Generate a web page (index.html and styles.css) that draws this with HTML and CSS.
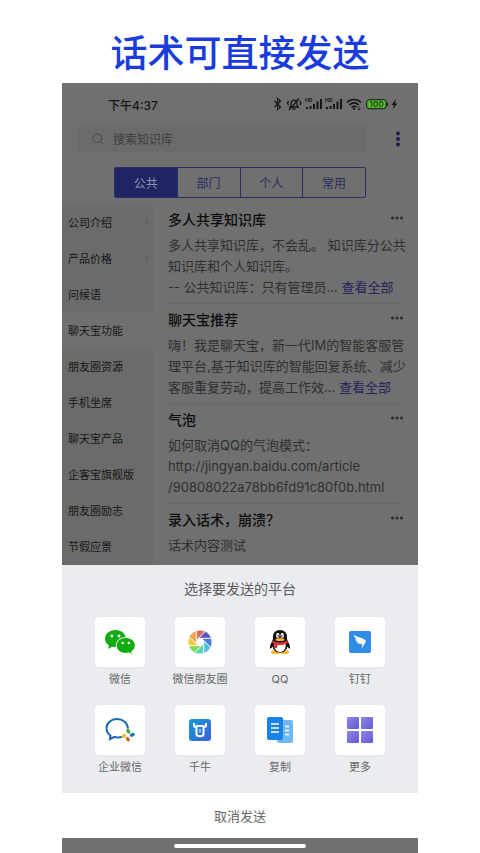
FILE: index.html
```html
<!DOCTYPE html>
<html lang="zh-CN">
<head>
<meta charset="utf-8">
<meta name="viewport" content="width=device-width, initial-scale=1">
<title>话术可直接发送</title>
<link rel="stylesheet" href="styles.css">
</head>
<body>
<h1 class="headline">话术可直接发送</h1>
<div class="phone">
  <header class="status">
    <span>下午4:37</span>
    <svg class="status-icons" width="126" height="16" viewBox="0 0 126 16" aria-hidden="true">
      <path d="M2.500 5l6 6L5.500 13.500V2.500L8.500 5l-6 6" fill="none" stroke="#161616" stroke-width="1.200"/>
      <g fill="none" stroke="#161616" stroke-width="1.300">
        <path d="M18 11c1.500-1.500 1-3 1.300-4.500 .5-3.300 5-3.300 5.500 0 .3 1.500-.2 3 1.200 4.500zM20.500 13h3M17 14L27 2.500M16.500 5l-1 2 1 2M28 5l1 2-1 2"/>
      </g>
      <g fill="#161616">
        <path d="M34 11h2v2h-2zM37.500 10h2v3h-2zM41 8h2v5h-2zM44.500 5.500h2V13h-2zM48 3h2v10h-2zM54 11h2v2h-2zM57.500 10h2v3h-2zM61 8h2v5h-2zM64.500 5.500h2V13h-2zM68 3h2v10h-2z"/>
        <text class="hd" x="33" y="6">HD</text>
        <text class="hd" x="53" y="6">HD</text>
      </g>
      <g fill="none" stroke="#161616" stroke-width="1.500">
        <path d="M75 6.500c4-4 10-4 14 0M77.300 9c3-2.700 6.500-2.700 9.400 0M79.500 11.300c1.700-1.500 3.400-1.500 5 0"/>
      </g>
      <circle cx="82" cy="12.700" r="1.200" fill="#161616"/>
      <path d="M87 10v4m-1.500-1.500L87 14l1.500-1.500" stroke="#161616" fill="none" stroke-width=".8"/>
      <rect x="94.700" y="3.700" width="19.500" height="9" rx="2.500" fill="#55b52f" stroke="#161616"/>
      <path d="M115.500 6.500v3.500" stroke="#161616"/>
      <text class="charge" x="104.500" y="11">100</text>
      <path d="M124 3l-4.500 6h2.500l-1.500 4.500L125.500 7.500H123z" fill="#161616"/>
    </svg>
  </header>
  <div class="search-row">
    <label class="search">
      <svg width="12" height="12" viewBox="0 0 12 12" aria-hidden="true"><circle cx="5.300" cy="5.300" r="4.300"/><path d="M8.500 8.500l2.500 2.500"/></svg>
      <input type="text" placeholder="搜索知识库" aria-label="搜索知识库">
    </label>
    <button class="menu" aria-label="菜单"><svg width="6" height="16" viewBox="0 0 6 16"><circle cx="3" cy="2.500" r="2"/><circle cx="3" cy="8" r="2"/><circle cx="3" cy="13.500" r="2"/></svg></button>
  </div>
  <nav class="tabs">
    <button class="on">公共</button><button>部门</button><button>个人</button><button>常用</button>
  </nav>
  <div class="library">
    <nav class="side">
      <button>公司介绍<svg width="5" height="8" viewBox="0 0 5 8"><path d="M1 1l3 3-3 3"/></svg></button>
      <button>产品价格<svg width="5" height="8" viewBox="0 0 5 8"><path d="M1 1l3 3-3 3"/></svg></button>
      <button>问候语</button>
      <button class="on">聊天宝功能</button>
      <button>朋友圈资源</button>
      <button>手机坐席</button>
      <button>聊天宝产品</button>
      <button>企客宝旗舰版</button>
      <button>朋友圈励志</button>
      <button>节假应景</button>
    </nav>
    <main class="list">
      <article>
        <header><h2>多人共享知识库</h2><button class="more" aria-label="更多操作"><svg width="12" height="4" viewBox="0 0 12 4"><circle cx="1.500" cy="2" r="1.500"/><circle cx="6" cy="2" r="1.500"/><circle cx="10.500" cy="2" r="1.500"/></svg></button></header>
        <p>多人共享知识库，不会乱。 知识库分公共<br>知识库和个人知识库。<br>-- 公共知识库：只有管理员... <a href="#">查看全部</a></p>
      </article>
      <article>
        <header><h2>聊天宝推荐</h2><button class="more" aria-label="更多操作"><svg width="12" height="4" viewBox="0 0 12 4"><circle cx="1.500" cy="2" r="1.500"/><circle cx="6" cy="2" r="1.500"/><circle cx="10.500" cy="2" r="1.500"/></svg></button></header>
        <p>嗨！我是聊天宝，新一代IM的智能客服管<br>理平台,基于知识库的智能回复系统、减少<br>客服重复劳动，提高工作效... <a href="#">查看全部</a></p>
      </article>
      <article>
        <header><h2>气泡</h2><button class="more" aria-label="更多操作"><svg width="12" height="4" viewBox="0 0 12 4"><circle cx="1.500" cy="2" r="1.500"/><circle cx="6" cy="2" r="1.500"/><circle cx="10.500" cy="2" r="1.500"/></svg></button></header>
        <p>如何取消QQ的气泡模式：<br>http://jingyan.baidu.com/article<br>/90808022a78bb6fd91c80f0b.html</p>
      </article>
      <article>
        <header><h2>录入话术，崩溃？</h2><button class="more" aria-label="更多操作"><svg width="12" height="4" viewBox="0 0 12 4"><circle cx="1.500" cy="2" r="1.500"/><circle cx="6" cy="2" r="1.500"/><circle cx="10.500" cy="2" r="1.500"/></svg></button></header>
        <p>话术内容测试</p>
      </article>
    </main>
  </div>
  <section class="sheet">
    <h3>选择要发送的平台</h3>
    <div class="apps">
      <button><span class="tile"><svg width="32" height="26" viewBox="0 0 32 26">
        <path fill="#12ab12" d="M11.500 1C5.500 1 1 4.800 1 9.700c0 2.800 1.400 5 3.900 6.600L4 20l4-2.200c1.200.3 2.300.4 3.500.4 6 0 10.500-3.900 10.500-8.500S17.500 1 11.500 1z"/>
        <path fill="#12ab12" stroke="#fff" stroke-width="1" d="M21.700 8.500c-5.300 0-9.500 3.400-9.500 7.900s4.200 8 9.500 8c1.200 0 2.300-.2 3.300-.5l3.500 1.800-.9-3.100c2.300-1.500 3.700-3.600 3.700-6.200 0-4.500-4.300-7.900-9.600-7.900z"/>
        <g fill="#fff"><circle cx="7.800" cy="7" r="1.400"/><circle cx="15" cy="7" r="1.400"/><circle cx="18.700" cy="14" r="1.200"/><circle cx="24.800" cy="14" r="1.200"/></g>
      </svg></span>微信</button>
      <button><span class="tile"><svg width="24" height="24" viewBox="-12 -12 24 24">
        <defs><path id="blade" d="M4 0L7.790 9.140A12 12 0 0 1-.95 11.970L2.830 2.830z"/></defs>
        <g stroke="#fff" stroke-width=".7">
          <use href="#blade" fill="#df6b5c" transform="rotate(-157)"/>
          <use href="#blade" fill="#5b50c0" transform="rotate(-112)"/>
          <use href="#blade" fill="#517fd8" transform="rotate(-67)"/>
          <use href="#blade" fill="#55bce2" transform="rotate(-22)"/>
          <use href="#blade" fill="#5bd3b0" transform="rotate(23)"/>
          <use href="#blade" fill="#7ed957" transform="rotate(68)"/>
          <use href="#blade" fill="#f1c93b" transform="rotate(113)"/>
          <use href="#blade" fill="#f0a24c" transform="rotate(158)"/>
        </g>
      </svg></span>微信朋友圈</button>
      <button><span class="tile"><svg width="22" height="26" viewBox="0 0 22 26">
        <ellipse cx="6.500" cy="23" rx="4.500" ry="2" fill="#f5b52e"/><ellipse cx="15.500" cy="23" rx="4.500" ry="2" fill="#f5b52e"/>
        <path d="M11 1C6.500 1 4 4 4 8c0 2-.2 3.500-1.200 5C1.500 15 .8 17 1 19c.5 1.300 1.500.2 2.500-1.500C4.500 21.500 7 23.500 11 23.500s6.500-2 7.500-6c1 1.700 2 2.800 2.500 1.500.2-2-.5-4-1.800-6C18.200 11.500 18 10 18 8c0-4-2.500-7-7-7z" fill="#111"/>
        <path d="M5.500 14h11c1 5-1.500 9-5.500 9s-6.500-4-5.500-9z" fill="#fff"/>
        <ellipse cx="8.800" cy="6.500" rx="1.700" ry="2.400" fill="#fff"/><ellipse cx="13.200" cy="6.500" rx="1.700" ry="2.400" fill="#fff"/>
        <circle cx="9.200" cy="6.800" r=".8"/><circle cx="12.800" cy="6.800" r=".8"/>
        <ellipse cx="11" cy="10.500" rx="4.500" ry="1.600" fill="#f5b52e"/>
        <path d="M4 11.500c4 2.500 10 2.500 14 0l.8 2.500c-3 2-6.800 2.300-10.300 1.800L8 19H5.300l.4-4L3.200 14z" fill="#df2f2f"/>
      </svg></span>QQ</button>
      <button><span class="tile"><svg width="22" height="22" viewBox="0 0 22 22">
        <rect width="22" height="22" rx="2" fill="#2f8de8"/>
        <path d="M5 4c4 2.500 8 2.700 11.300 5 .8.700.4 1.800-.2 2.900l-1.300 2-2.300 4.100.8-3.400-.7-1.600c-2.300.2-3.800-.3-4.900-1.900l2.500-.2C7.800 11 6.500 10 6 8.300l2.500.4C6.200 7.300 5.100 6 5 4z" fill="#fff"/>
      </svg></span>钉钉</button>
      <button><span class="tile"><svg width="30" height="26" viewBox="0 0 30 26">
        <path d="M23 11.500C22.500 5.500 17.500 2 12 2 6 2 1.500 6 1.500 11.200c0 3 1.500 5.600 4 7.300L5 22l4-2c3 .7 6 .5 8.500-.4" fill="none" stroke="#1c66b0" stroke-width="2"/>
        <g stroke-width="3.400" stroke-linecap="round"><path d="M22.800 13.500l1 1.500" stroke="#4cab43"/><path d="M28 17.500l-1.500.8" stroke="#1777c4"/><path d="M23.300 22.800l-.8-1.200" stroke="#d9652b"/><path d="M18.300 19.500l1.400-1" stroke="#efc22f"/></g>
      </svg></span>企业微信</button>
      <button><span class="tile"><svg width="22" height="22" viewBox="0 0 22 22">
        <defs><linearGradient id="bull" x2="1" y2="1"><stop stop-color="#159ad9"/><stop offset="1" stop-color="#3a62d8"/></linearGradient></defs>
        <rect width="22" height="22" rx="3" fill="url(#bull)"/>
        <path d="M5 4v2.500c0 1 .7 1.500 2 1.500M17 4v2.500c0 1-.7 1.500-2 1.500M7.500 7h7v8c0 3-7 3-7 0z" fill="none" stroke="#fff" stroke-width="2" stroke-linejoin="round"/><path d="M11 10v3.500" stroke="#fff" stroke-width="1"/>
      </svg></span>千牛</button>
      <button><span class="tile"><svg width="26" height="26" viewBox="0 0 26 26">
        <rect x="10" y="3" width="16" height="23" rx="2" fill="#6fb8f4"/><rect width="16" height="23" rx="2" fill="#1b82e8"/>
        <path d="M4 7h8M4 11h8M4 15h8M18 9.500h4M18 13.500h4M18 17.500h4" stroke="#fff" stroke-width="1.300"/>
      </svg></span>复制</button>
      <button><span class="tile"><svg width="26" height="26" viewBox="0 0 26 26">
        <defs><linearGradient id="grid" x2="1" y2="1"><stop stop-color="#8c86e8"/><stop offset="1" stop-color="#655ad2"/></linearGradient></defs>
        <g fill="url(#grid)"><rect x="0" y="0" width="12" height="12" rx="1"/><rect x="14" y="0" width="12" height="12" rx="1"/><rect x="0" y="14" width="12" height="12" rx="1"/><rect x="14" y="14" width="12" height="12" rx="1"/></g>
      </svg></span>更多</button>
    </div>
  </section>
  <button class="cancel">取消发送</button>
  <footer class="homebar"><span></span></footer>
</div>
</body>
</html>
```

FILE: styles.css
```css
* { box-sizing: border-box; }
body {
  margin: 0;
  background: #fff;
  font-family: Inter, "Noto Sans CJK SC", sans-serif;
}
h1, h2, h3, p { margin: 0; }
button {
  border: 0;
  padding: 0;
  background: none;
  font: inherit;
  color: inherit;
}
svg { display: block; }

.headline {
  padding: 26px 0 1px;
  font-size: 37px;
  line-height: 56px;
  font-weight: 500;
  text-align: center;
  color: #1b3cdc;
}
.phone {
  margin: 0 62px;
  background: #707070;
}

.status {
  display: flex;
  justify-content: space-between;
  align-items: center;
  height: 42px;
  padding: 0 20px 0 46px;
  font-size: 12px;
  font-weight: 500;
  color: #161616;
}
.hd { font-size: 5px; font-weight: 700; }
.charge {
  font-size: 8px;
  font-weight: 600;
  text-anchor: middle;
  fill: #1b4d10;
}

.search-row {
  display: flex;
  align-items: center;
  justify-content: space-between;
  padding: 0 17px 0 15px;
}
.search {
  flex: 1;
  display: flex;
  align-items: center;
  gap: 9px;
  height: 28px;
  margin-right: 28px;
  padding-left: 15px;
  border-radius: 4px;
  background: #6b6b6b;
}
.search svg { fill: none; stroke: #494949; }
.search input {
  flex: 1;
  min-width: 0;
  border: 0;
  padding: 0;
  background: none;
  font: inherit;
  font-size: 12px;
  color: #3d3d3d;
}
.search input::placeholder { color: #3d3d3d; opacity: 1; }
.menu { fill: #1f1f55; }

.tabs {
  display: flex;
  height: 31px;
  margin: 14px 52px 6px;
  border: 1px solid #2a2e62;
  border-radius: 2px;
}
.tabs button {
  flex: 1;
  font-size: 12px;
  color: #2a2c5c;
}
.tabs button + button { border-left: 1px solid #2a2e62; }
.tabs .on { background: #1f2463; color: #8f91a4; }

.library {
  display: flex;
  height: 361px;
  overflow: hidden;
}
.side {
  flex: none;
  width: 91px;
  background: #6b6b6b;
}
.side button {
  display: flex;
  align-items: center;
  justify-content: space-between;
  width: 100%;
  height: 36px;
  padding: 0 4px 0 6px;
  font-size: 11px;
  color: #161616;
}
.side .on { background: #707070; }
.side svg { fill: none; stroke: #5a5a5a; }

.list {
  flex: 1;
  min-width: 0;
  padding: 0 15px;
}
.list article {
  height: 100px;
  padding-top: 6px;
  border-bottom: 1px solid #686868;
}
.list header {
  display: flex;
  justify-content: space-between;
  height: 25px;
}
.list h2 {
  font-size: 14px;
  line-height: 20px;
  font-weight: 500;
  color: #0e0e0e;
}
.more { height: 16px; fill: #2b2b2b; }
.list p {
  font-size: 13px;
  line-height: 21px;
  white-space: nowrap;
  color: #2f2f2f;
}
.list a {
  color: #23245c;
  text-decoration: none;
}

.sheet {
  padding: 14px 18px 18px;
  background: #ebecf0;
}
.sheet h3 {
  font-size: 14px;
  line-height: 20px;
  font-weight: 400;
  text-align: center;
  color: #5c5c5e;
}
.apps {
  display: grid;
  grid-template-columns: repeat(4, 1fr);
  row-gap: 18px;
  margin-top: 18px;
}
.apps button {
  display: flex;
  flex-direction: column;
  align-items: center;
  gap: 4px;
  font-size: 11px;
  line-height: 16px;
  color: #666;
}
.tile {
  display: grid;
  place-items: center;
  width: 50px;
  height: 50px;
  border-radius: 4px;
  background: #fff;
}
.cancel {
  display: block;
  width: 100%;
  height: 45px;
  background: #fff;
  font-size: 13px;
  color: #666;
}
.homebar {
  display: flex;
  justify-content: center;
  height: 15px;
  padding-top: 6px;
}
.homebar span {
  width: 132px;
  height: 4px;
  border-radius: 2px;
  background: #fff;
}
```
